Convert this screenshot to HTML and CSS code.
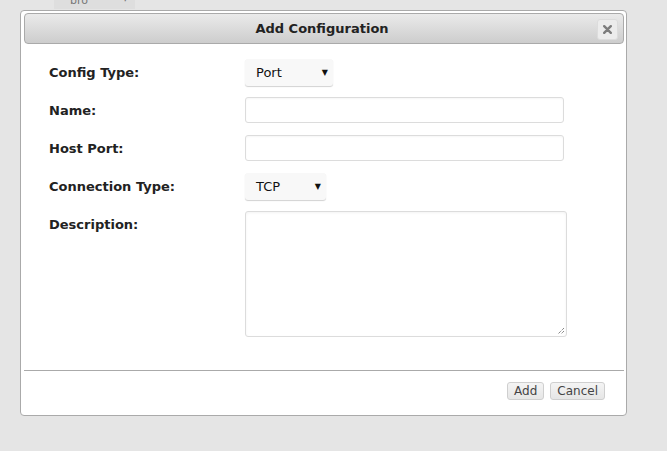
FILE: index.html
```html
<!DOCTYPE html>
<html>
<head>
<meta charset="utf-8">
<link rel="stylesheet" href="styles.css">
</head>
<body>
<div class="bg-tab"><span class="bg-text">bro</span><span class="bg-dot">·</span></div>
<div class="dialog">
  <div class="titlebar">
    <span></span>
    <span class="title">Add Configuration</span>
    <button class="close" type="button" aria-label="close"><svg width="9" height="9" viewBox="0 0 9 9"><path d="M1.2 1.2 L7.8 7.8 M7.8 1.2 L1.2 7.8" stroke="#7d7d7d" stroke-width="2.4" stroke-linecap="round"/></svg></button>
  </div>
  <form class="form">
    <label class="lbl">Config Type:</label>
    <div class="ctl"><div class="select sel-port"><span>Port</span><span class="arrow">&#x25BC;</span></div></div>
    <label class="lbl">Name:</label>
    <div class="ctl"><div class="input"></div></div>
    <label class="lbl">Host Port:</label>
    <div class="ctl"><div class="input"></div></div>
    <label class="lbl">Connection Type:</label>
    <div class="ctl"><div class="select sel-tcp"><span>TCP</span><span class="arrow">&#x25BC;</span></div></div>
    <label class="lbl">Description:</label>
    <div class="ctl"><div class="textarea"><svg class="grip" width="8" height="8" viewBox="0 0 8 8"><path d="M7 1 L1 7 M7 4 L4 7" stroke="#555" stroke-width="1" stroke-dasharray="1 1"/></svg></div></div>
  </form>
  <div class="divider"></div>
  <div class="footer">
    <button class="btn" type="button">Add</button>
    <button class="btn" type="button">Cancel</button>
  </div>
</div>
</body>
</html>
```

FILE: styles.css
```css
html, body {
  margin: 0;
  padding: 0;
}
body {
  background: #e5e5e5;
  font-family: "DejaVu Sans", Verdana, sans-serif;
  width: 667px;
  height: 451px;
  overflow: hidden;
}
.bg-tab {
  margin-left: 54px;
  width: 81px;
  height: 9px;
  background: #dedede;
  overflow: hidden;
  display: flex;
  justify-content: space-between;
  align-items: flex-end;
  font-size: 11px;
  color: #777;
}
.bg-text {
  margin-left: 16px;
  line-height: 11px;
  transform: translateY(-3px);
}
.bg-dot {
  margin-right: 8px;
  line-height: 11px;
  transform: translateY(-3px);
}
.dialog {
  margin: 1px 0 0 20px;
  width: 607px;
  height: 406px;
  box-sizing: border-box;
  background: #fff;
  border: 1px solid #aaa;
  border-radius: 4px;
  padding: 2px 2px 0 3px;
  display: flex;
  flex-direction: column;
}
.titlebar {
  height: 31px;
  box-sizing: border-box;
  border: 1px solid #aaa;
  border-radius: 4px;
  background: linear-gradient(#eaeaea, #cdcdcd);
  display: grid;
  grid-template-columns: 1fr auto 1fr;
  align-items: center;
  padding-right: 5px;
}
.title {
  font-weight: bold;
  font-size: 13px;
  color: #222;
  padding-left: 1px;
}
.close {
  justify-self: end;
  width: 21px;
  height: 21px;
  margin-top: 1px;
  padding: 0;
  border: 1px solid #dcdcdc;
  border-radius: 3px;
  background: #ececec;
  display: flex;
  align-items: center;
  justify-content: center;
}
.close svg {
  display: block;
}
.form {
  margin: 15px 0 0 0;
  padding-left: 25px;
  display: grid;
  grid-template-columns: 196px 1fr;
  grid-template-rows: 38px 38px 38px 38px auto;
}
.lbl {
  font-weight: bold;
  font-size: 13px;
  color: #222;
  line-height: 27px;
}
.ctl {
  display: flex;
  align-items: flex-start;
}
.select {
  height: 27px;
  box-sizing: border-box;
  background: #f8f8f8;
  border-radius: 3px;
  box-shadow: 0 1px 1px rgba(0, 0, 0, 0.18);
  display: flex;
  align-items: center;
  justify-content: space-between;
  padding: 0 5px 0 11px;
  font-size: 13px;
  color: #111;
}
.sel-port { width: 88px; }
.sel-tcp { width: 81px; }
.arrow {
  font-size: 8px;
  color: #111;
}
.input {
  width: 319px;
  height: 26px;
  box-sizing: border-box;
  border: 1px solid #dcdcdc;
  border-radius: 3px;
  box-shadow: inset 0 1px 2px rgba(0, 0, 0, 0.04);
}
.textarea {
  width: 322px;
  height: 126px;
  box-sizing: border-box;
  border: 1px solid #dcdcdc;
  border-radius: 3px;
  box-shadow: inset 0 1px 3px rgba(0, 0, 0, 0.05);
  display: flex;
  align-items: flex-end;
  justify-content: flex-end;
  padding: 0 1px 1px 0;
}
.grip {
  display: block;
}
.divider {
  margin-top: 33px;
  height: 1px;
  background: #aaa;
}
.footer {
  display: flex;
  justify-content: flex-end;
  gap: 6px;
  padding: 11px 19px 0 0;
}
.btn {
  height: 18px;
  box-sizing: border-box;
  padding: 0 6px;
  border: 1px solid #cfcfcf;
  border-radius: 3px;
  background: linear-gradient(#f4f4f4, #e6e6e6);
  color: #444;
  font-family: "DejaVu Sans", sans-serif;
  font-size: 12px;
  line-height: 16px;
}
```
